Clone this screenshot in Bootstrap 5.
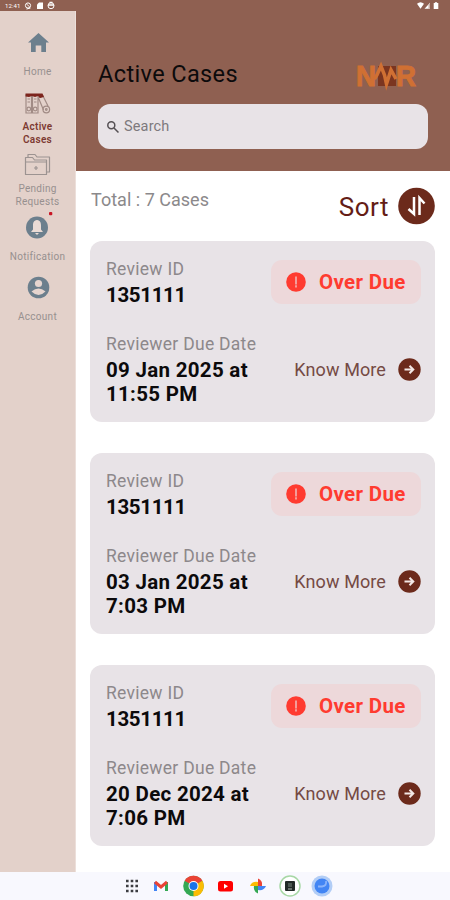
<!DOCTYPE html>
<html lang="en">
<head>
<meta charset="utf-8">
<meta name="viewport" content="width=device-width, initial-scale=1">
<title>Active Cases</title>
<link href="https://cdn.jsdelivr.net/npm/bootstrap@5.3.0/dist/css/bootstrap.min.css" rel="stylesheet">
<style>
body{font-family:Roboto,"Liberation Sans",sans-serif;background:#fff;color:#0c0a0b}
svg{display:block;flex:none}
.screen{width:450px;height:900px}
.statusbar{height:11px;background:#8f6051;color:#fff;font-size:6px;line-height:11px;padding:0 11px 0 5px;letter-spacing:.1px}
.sidebar{width:76px;background:#e3d1ca;border-right:1px solid #ecdfda;padding-top:1px}
.side-link{color:#97908f;font-size:10px;line-height:12.5px;letter-spacing:.28px;text-decoration:none}
.side-link.current{color:#7d3a32;font-weight:600;font-size:10px}
.side-home{height:78px}
.side-cases{height:57px}
.side-pending{height:62px}
.side-notice{height:60px}
.home-label{margin-top:7px}
.pending-label{margin-top:4px}
.notice-label{margin-top:10px}
.account-label{margin-top:7px}
.top-panel{height:160px;background:#8f6051;padding:48px 22px 0 22px}
.title{font-size:23.5px;line-height:30px;letter-spacing:.38px;font-weight:400}
.brand{margin-right:9px}
.search{height:45px;border-radius:12px;background:#e8e3e7;color:#7d797d;font-size:14.5px;padding-left:8px;margin-top:15px;letter-spacing:.15px}
.toolbar{height:70px;padding:16px 15px 0 15px}
.total{font-size:18px;line-height:26px;letter-spacing:.02px;color:#8b898b}
.sort{height:38px;color:#641d16;font-size:26px;line-height:38px;letter-spacing:.5px}
.sort-label{padding-top:2px}
.cases{gap:31px;padding:0 15px 0 14px}
.case{height:181px;border-radius:12px;background:#e8e3e7;padding:16px 14px 0 16px}
.caption-text{font-size:17.5px;line-height:24px;letter-spacing:.28px;color:#8d888b}
.value{font-size:20.5px;line-height:24.5px;font-weight:700;padding-top:2px;letter-spacing:-.35px}
.value.date{letter-spacing:.3px}
.due-row{margin-top:24px}
.overdue{width:150px;height:44px;border-radius:11px;background:#edd8da;color:#ff3b30;font-size:20.5px;font-weight:700;letter-spacing:.35px;padding:0 0 0 15px;margin-top:3px}
.due-label{margin-left:13px;padding-top:1px}
.more{align-self:flex-start;margin-top:26px;gap:12px;color:#754a44;font-size:18px;line-height:24px;letter-spacing:.1px}
.dock{height:28px;background:#f8f8fe}
</style>
</head>
<body>
<svg width="0" height="0" class="position-absolute" aria-hidden="true">
<symbol id="alert" viewBox="0 0 20 20"><circle cx="10" cy="10" r="9.8" fill="#ff3b30"/><path d="M10 4.500v8M10 13.200v2.300" stroke="#f2b6b4" stroke-width="1.600"/></symbol>
<symbol id="arrow" viewBox="0 0 23 23"><circle cx="11.500" cy="11.500" r="11.200" fill="#6c2a1b"/><path d="M6.500 11.500H15M11.500 7.700l3.800 3.800-3.800 3.800" fill="none" stroke="#f3e8e5" stroke-width="2"/></symbol>
</svg>
<div class="screen d-flex flex-column overflow-hidden">
  <div class="statusbar d-flex align-items-center justify-content-between">
    <div class="d-flex align-items-center">
      <span>12:41</span>
      <svg class="ms-1" width="34" height="9" viewBox="0 0 34 9"><g fill="none" stroke="#fff"><circle cx="4" cy="4.500" r="2.600"/><path d="M2.800 3.200l2.600 2.600M2.500 8l4-1"/></g><path d="M15 1.500h4v6.500h-6v-4.500z" fill="#fff"/><circle cx="27" cy="4.700" r="3" fill="none" stroke="#fff"/><path d="M24 4h6M25.500 1.500h3" stroke="#fff" stroke-width="1.300"/></svg>
    </div>
    <svg width="22" height="9" viewBox="0 0 22 9" fill="#fff"><path d="M0 2.800Q3.500-.4 7 2.800L3.500 7.800zM13 1.800V7.800H7.500zM16.700 2h1.200V1.200h2.200V2h1.200v6h-4.600z"/><path d="M11.500 3.500v4.300H13V1.800z" fill="#c9b0a7"/></svg>
  </div>
  <div class="d-flex flex-grow-1">
    <nav class="sidebar d-flex flex-column align-items-center text-center">
      <a class="side-link side-home d-flex flex-column align-items-center pt-3" href="#">
        <svg width="22" height="31" viewBox="0 0 22 31"><path d="M11.500 5 22 14.500h-3V24h-4.700v-6.500H8.700V24H4v-9.500H1z" fill="#6c7f8d"/></svg>
        <span class="home-label">Home</span>
      </a>
      <a class="side-link side-cases current d-flex flex-column align-items-center" href="#">
        <svg width="27" height="31" viewBox="0 0 27 31"><g fill="none" stroke="#a18b85" stroke-width="1.200"><path d="M2 5h5.500v18H2zM8.500 5H14v18H8.500zM14.500 8l4.500-2 5 10M14.500 8l5 12M3.500 9h2.500M3.500 12h2.500M10 9h2.500M10 12h2.500"/><circle cx="4.800" cy="19" r="1.800"/><circle cx="11.200" cy="19" r="1.800"/><circle cx="22.300" cy="19.500" r="3.300"/><circle cx="22.300" cy="19.500" r=".8"/></g><path d="M1.500 3.500h17L20 7l-4 1-2-2-3 1-3-1-3 1-3.500-.5z" fill="#7d241d"/></svg>
        <span>Active<br>Cases</span>
      </a>
      <a class="side-link side-pending d-flex flex-column align-items-center" href="#">
        <svg class="mt-1" width="28" height="28" viewBox="0 0 28 28"><g fill="none" stroke="#9c9391" stroke-width="1.200" stroke-linejoin="round"><path d="M1.500 6.500h7l2 2.500h12v14.500h-21zM4 6V3.500h7L13 6h12.500v15H23"/><path d="M1.500 11h21M10 17h4M12 15v4"/></g></svg>
        <span class="pending-label">Pending<br>Requests</span>
      </a>
      <a class="side-link side-notice d-flex flex-column align-items-center" href="#">
        <svg width="36" height="32" viewBox="0 0 36 32"><circle cx="18" cy="18.500" r="11" fill="#6c7f8d"/><path d="M18 11c-3.500.5-4 3-4 5.500v4l-2 2.500h12l-2-2.500v-4c0-2.500-.5-5-4-5.500zM16 24h4l-2 2z" fill="#eadbd5"/><rect x="30" y="3" width="3.300" height="3.300" rx="1" fill="#c91624"/></svg>
        <span class="notice-label">Notification</span>
      </a>
      <a class="side-link d-flex flex-column align-items-center" href="#">
        <svg class="mt-1" width="24" height="31" viewBox="0 0 24 31"><circle cx="12.500" cy="14.500" r="10.800" fill="#6c7f8d"/><circle cx="12.500" cy="10.500" r="3.600" fill="#e6d5cf"/><path d="M5.500 18.500q7-6 14 0-7 7-14 0z" fill="#e6d5cf"/></svg>
        <span class="account-label">Account</span>
      </a>
    </nav>
    <main class="flex-grow-1">
      <header class="top-panel">
        <div class="d-flex justify-content-between align-items-center">
          <h1 class="title mb-0">Active Cases</h1>
          <svg class="brand overflow-visible" width="66" height="30" viewBox="0 0 66 30" font-family="Liberation Sans,sans-serif" font-weight="700" font-size="29" fill="#d07033" stroke="#d07033" stroke-width="1"><path d="M25 7h18v20H25z" fill="#7b3520" stroke="none"/><text x="3" y="27" textLength="20" lengthAdjust="spacingAndGlyphs">N</text><text x="43" y="27" textLength="20" lengthAdjust="spacingAndGlyphs">R</text><path d="M21.500 20l2.500-4 4-9 3.500 9 2 9 4.500-14 5 9" fill="none" stroke-width="3.500"/></svg>
        </div>
        <label class="search d-flex align-items-center gap-1">
          <svg width="14" height="14" viewBox="0 0 14 14"><path d="M8 8l4.500 4.500" stroke="#555054" stroke-width="1.500"/><circle cx="5.300" cy="5.300" r="3.500" fill="none" stroke="#555054" stroke-width="1.500"/></svg>
          <span>Search</span>
        </label>
      </header>
      <div class="toolbar d-flex justify-content-between align-items-start">
        <span class="total">Total : 7 Cases</span>
        <div class="sort d-flex align-items-center gap-2"><span class="sort-label">Sort</span>
          <svg width="38" height="38" viewBox="0 0 38 38"><circle cx="19.500" cy="19" r="18.300" fill="#6c2a1b"/><path d="M17 10v17l-5.500-5M22.500 28V11l5 5.500" fill="none" stroke="#fff" stroke-width="2.500"/></svg>
        </div>
      </div>
      <div class="cases d-flex flex-column">
        <article class="case">
          <div class="d-flex justify-content-between"><div><div class="caption-text">Review ID</div><div class="value">1351111</div></div><div class="overdue d-flex align-items-center"><svg width="20" height="20"><use href="#alert"/></svg><span class="due-label">Over Due</span></div></div>
          <div class="due-row d-flex justify-content-between"><div><div class="caption-text">Reviewer Due Date</div><div class="value date">09 Jan 2025 at<br>11:55 PM</div></div><a class="more d-flex align-items-center text-decoration-none" href="#"><span>Know More</span><svg width="23" height="23"><use href="#arrow"/></svg></a></div>
        </article>
        <article class="case">
          <div class="d-flex justify-content-between"><div><div class="caption-text">Review ID</div><div class="value">1351111</div></div><div class="overdue d-flex align-items-center"><svg width="20" height="20"><use href="#alert"/></svg><span class="due-label">Over Due</span></div></div>
          <div class="due-row d-flex justify-content-between"><div><div class="caption-text">Reviewer Due Date</div><div class="value date">03 Jan 2025 at<br>7:03 PM</div></div><a class="more d-flex align-items-center text-decoration-none" href="#"><span>Know More</span><svg width="23" height="23"><use href="#arrow"/></svg></a></div>
        </article>
        <article class="case">
          <div class="d-flex justify-content-between"><div><div class="caption-text">Review ID</div><div class="value">1351111</div></div><div class="overdue d-flex align-items-center"><svg width="20" height="20"><use href="#alert"/></svg><span class="due-label">Over Due</span></div></div>
          <div class="due-row d-flex justify-content-between"><div><div class="caption-text">Reviewer Due Date</div><div class="value date">20 Dec 2024 at<br>7:06 PM</div></div><a class="more d-flex align-items-center text-decoration-none" href="#"><span>Know More</span><svg width="23" height="23"><use href="#arrow"/></svg></a></div>
        </article>
      </div>
    </main>
  </div>
  <footer class="dock d-flex align-items-center justify-content-center">
    <svg width="216" height="26" viewBox="0 0 216 26">
      <path d="M9 8h12M9 13h12M9 18h12" stroke="#3c3d41" stroke-width="2.600" stroke-dasharray="2.600 2.100"/>
      <g fill="none" stroke-width="3"><path d="M38.500 18V9" stroke="#4285f4"/><path d="M49.500 18V9" stroke="#34a853"/><path d="M38 9l6 5 6-5" stroke="#ea4335"/></g>
      <circle cx="76.500" cy="13" r="10.300" fill="#34a853"/><path d="M76.500 13 67.600 7.800A10.300 10.300 0 0 1 85.400 7.800z" fill="#ea4335"/><path d="M76.500 13l8.900-5.200A10.300 10.300 0 0 1 76.500 23.300z" fill="#fbbc04"/><path d="M67.600 7.800h17.800L76.500 9z" fill="#ea4335"/><circle cx="76.500" cy="13" r="5" fill="#fff"/><circle cx="76.500" cy="13" r="4" fill="#1a73e8"/>
      <rect x="101" y="8" width="15" height="10.500" rx="2.500" fill="#f00"/><path d="M107 10.800v5l4-2.500z" fill="#fff"/>
      <path d="M141 13V5.500q5 2 4 7.500z" fill="#ea4335"/><path d="M141 13h8q-2 5-8 4z" fill="#4285f4"/><path d="M141 13v7.500q-5-2-4-7.500z" fill="#34a853"/><path d="M141 13h-8q2-5 8-4z" fill="#fbbc04"/>
      <circle cx="173" cy="13" r="10" fill="#fff" stroke="#a7d7a5" stroke-width="1.500"/><rect x="168" y="8" width="10" height="10" rx="1" fill="#222a27"/><path d="M171 10h4v4h-4z" fill="#4b5751"/><path d="M171 16h4" stroke="#aebbb3"/>
      <circle cx="205" cy="13" r="10.500" fill="#b2cdf6"/><circle cx="205" cy="13" r="7.500" fill="#4285f4"/><path d="M209 8q1 5-4 5.500h-4" fill="none" stroke="#8bb4fa" stroke-width="1.800"/>
    </svg>
  </footer>
</div>
<script src="https://cdn.jsdelivr.net/npm/bootstrap@5.3.0/dist/js/bootstrap.bundle.min.js"></script>
</body>
</html>
